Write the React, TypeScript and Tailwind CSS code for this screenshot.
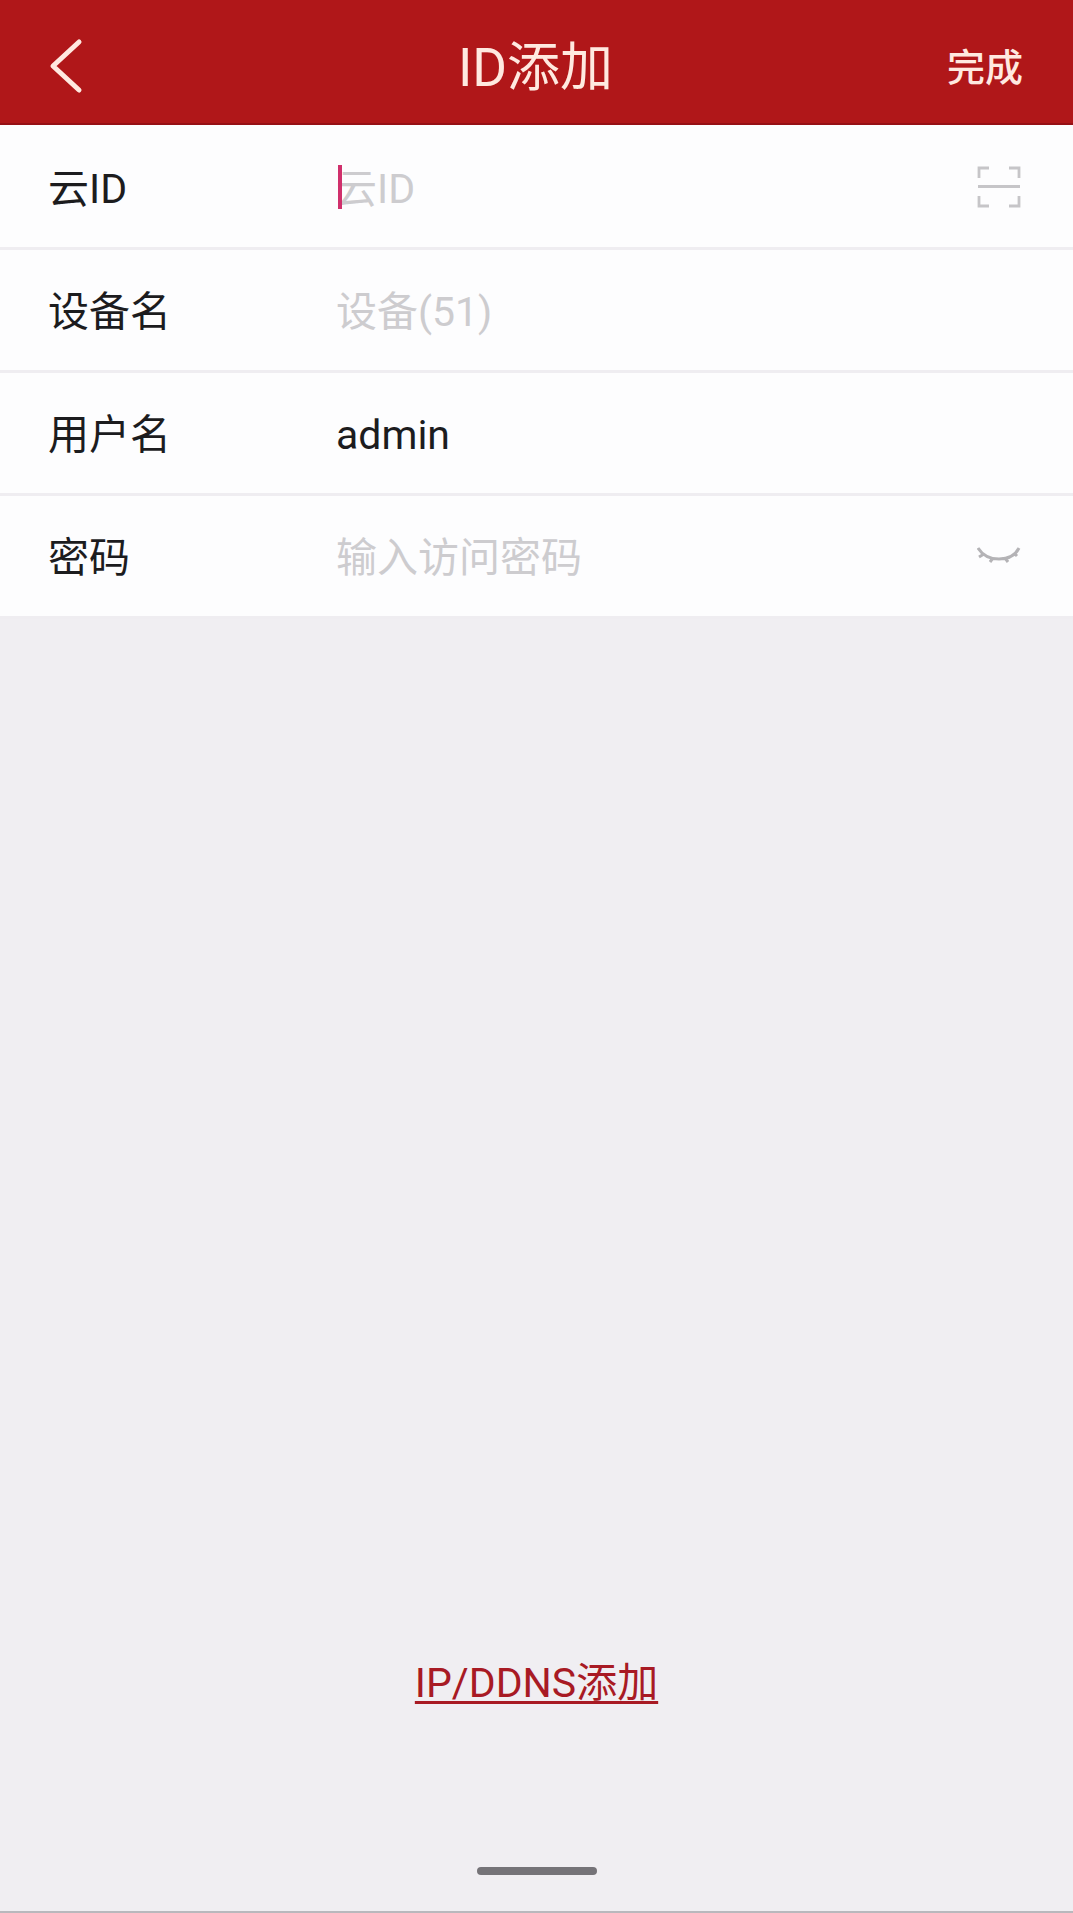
import { useState } from "react";

function BackIcon() {
  return (
    <svg width="40" height="60" viewBox="0 0 40 60" fill="none" aria-hidden="true">
      <path
        d="M31 4 5 28l26 24"
        stroke="currentColor"
        strokeWidth="5"
        strokeLinecap="round"
        strokeLinejoin="round"
      />
    </svg>
  );
}

function ScanIcon() {
  return (
    <svg width="48" height="48" viewBox="0 0 48 48" fill="none" aria-hidden="true">
      <path
        d="M2 13V3h10M32 3h10v10M42 31v10H32M12 41H2V31M1 21.5h42"
        stroke="currentColor"
        strokeWidth="2.8"
      />
    </svg>
  );
}

function ClosedEyeIcon() {
  return (
    <svg width="48" height="48" viewBox="0 0 48 48" fill="none" aria-hidden="true">
      <path
        d="M1 14c5 8 12 11 21 11s16-3 20-11M7 20l-5 3M16 24l-3 4M28 24l3 4M37 19l3 3"
        stroke="currentColor"
        strokeWidth="3"
      />
    </svg>
  );
}

const FIELDS = [
  { id: "cloud-id", label: "云ID", placeholder: "云ID", value: "" },
  { id: "device", label: "设备名", placeholder: "设备(51)", value: "" },
  { id: "user", label: "用户名", placeholder: "", value: "admin" },
  { id: "password", label: "密码", placeholder: "输入访问密码", value: "" },
];

export default function App() {
  const [showPassword, setShowPassword] = useState(false);

  return (
    <div className="flex min-h-screen flex-col border-b-2 border-[#b9b8bd] bg-[#f0eef2] font-[Roboto,'Noto_Sans_CJK_SC',sans-serif] text-[41px] leading-[60px] text-[#1c1c1e]">
      <header className="grid h-[125px] grid-cols-[1fr_auto_1fr] items-center border-b-2 border-[#961015] bg-[#b01719] pt-3 pr-[50px] pl-12 text-[#ffe9e0]">
        <button type="button" aria-label="返回" className="justify-self-start">
          <BackIcon />
        </button>
        <h1 className="text-[53px]">ID添加</h1>
        <button type="button" className="justify-self-end text-[38px] font-medium">
          完成
        </button>
      </header>

      <form className="bg-[#fdfdfe] pt-0.5">
        {FIELDS.map((field) => (
          <div key={field.id} className="flex h-[123px] items-center border-b-3 border-[#efedf1] px-12 pt-1">
            <label htmlFor={field.id} className="w-72 shrink-0">
              {field.label}
            </label>
            <div className="relative min-w-0 flex-1">
              <input
                id={field.id}
                type={field.id === "password" && !showPassword ? "password" : "text"}
                defaultValue={field.value}
                placeholder={field.placeholder}
                className="block h-[60px] w-full bg-transparent outline-none placeholder:text-[#cdcccf]"
              />
              {/* Text cursor */}
              {field.id === "cloud-id" && (
                <span className="absolute top-1.5 left-0.5 h-11 w-1 bg-[#d0306c]" />
              )}
            </div>
            {field.id === "cloud-id" && (
              <button type="button" aria-label="扫码" className="text-[#c6c5c8]">
                <ScanIcon />
              </button>
            )}
            {field.id === "password" && (
              <button
                type="button"
                aria-label="显示密码"
                className="text-[#b4b3b6]"
                onClick={() => setShowPassword(!showPassword)}
              >
                <ClosedEyeIcon />
              </button>
            )}
          </div>
        ))}
      </form>

      <footer className="mt-auto flex flex-col items-center pb-9">
        <a
          href="#ip-ddns"
          className="mb-[154px] text-[#a81a24] underline decoration-3 underline-offset-4 [text-decoration-skip-ink:none]"
        >
          IP/DDNS添加
        </a>
        <div className="h-2 w-30 rounded-full bg-[#757378]" />
      </footer>
    </div>
  );
}
